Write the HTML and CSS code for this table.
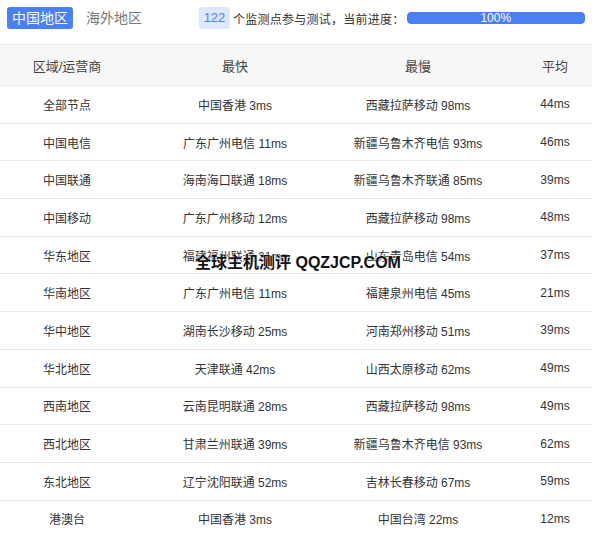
FILE: index.html
```html
<!DOCTYPE html>
<html lang="zh-CN">
<head>
<meta charset="utf-8">
<title>监测</title>
<link rel="stylesheet" href="styles.css">
</head>
<body>
<div class="page">
  <div class="topbar">
    <span class="tab active">中国地区</span>
    <span class="tab">海外地区</span>
    <span class="badge">122</span>
    <span class="info">个监测点参与测试，当前进度：</span>
    <div class="progress"><div class="progress-fill" style="width:100%">100%</div></div>
  </div>
  <div class="table-wrap">
    <div class="table">
      <div class="row head"><div class="cell">区域/运营商</div><div class="cell">最快</div><div class="cell">最慢</div><div class="cell">平均</div></div>
      <div class="row"><div class="cell">全部节点</div><div class="cell">中国香港 3ms</div><div class="cell">西藏拉萨移动 98ms</div><div class="cell">44ms</div></div>
      <div class="row"><div class="cell">中国电信</div><div class="cell">广东广州电信 11ms</div><div class="cell">新疆乌鲁木齐电信 93ms</div><div class="cell">46ms</div></div>
      <div class="row"><div class="cell">中国联通</div><div class="cell">海南海口联通 18ms</div><div class="cell">新疆乌鲁木齐联通 85ms</div><div class="cell">39ms</div></div>
      <div class="row"><div class="cell">中国移动</div><div class="cell">广东广州移动 12ms</div><div class="cell">西藏拉萨移动 98ms</div><div class="cell">48ms</div></div>
      <div class="row"><div class="cell">华东地区</div><div class="cell">福建福州联通 21ms</div><div class="cell">山东青岛电信 54ms</div><div class="cell">37ms</div></div>
      <div class="row"><div class="cell">华南地区</div><div class="cell">广东广州电信 11ms</div><div class="cell">福建泉州电信 45ms</div><div class="cell">21ms</div></div>
      <div class="row"><div class="cell">华中地区</div><div class="cell">湖南长沙移动 25ms</div><div class="cell">河南郑州移动 51ms</div><div class="cell">39ms</div></div>
      <div class="row"><div class="cell">华北地区</div><div class="cell">天津联通 42ms</div><div class="cell">山西太原移动 62ms</div><div class="cell">49ms</div></div>
      <div class="row"><div class="cell">西南地区</div><div class="cell">云南昆明联通 28ms</div><div class="cell">西藏拉萨移动 98ms</div><div class="cell">49ms</div></div>
      <div class="row"><div class="cell">西北地区</div><div class="cell">甘肃兰州联通 39ms</div><div class="cell">新疆乌鲁木齐电信 93ms</div><div class="cell">62ms</div></div>
      <div class="row"><div class="cell">东北地区</div><div class="cell">辽宁沈阳联通 52ms</div><div class="cell">吉林长春移动 67ms</div><div class="cell">59ms</div></div>
      <div class="row"><div class="cell">港澳台</div><div class="cell">中国香港 3ms</div><div class="cell">中国台湾 22ms</div><div class="cell">12ms</div></div>
    </div>
  </div>
  <div class="watermark">全球主机测评 QQZJCP.COM</div>
</div>
</body>
</html>
```
FILE: styles.css
```css
html, body {
  margin: 0;
  padding: 0;
  background: #fff;
}
body {
  font-family: "Liberation Sans", Arial, "Noto Sans CJK SC", sans-serif;
  color: #333;
  overflow: hidden;
}
.page {
  position: relative;
  width: 592px;
  height: 534px;
  overflow: hidden;
}
.topbar {
  display: flex;
  align-items: center;
  height: 22px;
  padding: 7px 7px 0;
  margin-bottom: 15px;
}
.tab {
  height: 22px;
  line-height: 22px;
  padding: 0 5px;
  font-size: 14px;
  color: #777;
  border-radius: 3px;
  margin-right: 8px;
}
.tab.active {
  background: #4a80f5;
  color: #fff;
}
.badge {
  margin-left: 44px;
  height: 22px;
  line-height: 22px;
  width: 31px;
  text-align: center;
  font-size: 13px;
  color: #4a80f5;
  background: #dde7fd;
  border-radius: 3px;
}
.info {
  margin-left: 3px;
  font-size: 12px;
  letter-spacing: 0.25px;
  color: #333;
}
.progress {
  flex: 1;
  margin-left: 2px;
  height: 12px;
  border-radius: 4px;
  background: #e6ebf5;
  overflow: hidden;
}
.progress-fill {
  height: 12px;
  line-height: 12px;
  background: #4a80f5;
  color: #fff;
  font-size: 12px;
  text-align: center;
  border-radius: 4px;
}
.table-wrap {
  width: 592px;
  overflow: hidden;
  border-top: 1px solid #e6e8eb;
}
.table {
  width: 610px;
}
.row {
  display: grid;
  grid-template-columns: 134px 202px 164px 110px;
  height: 37.7px;
  box-sizing: border-box;
  border-bottom: 1px solid #e6e9ee;
  font-size: 12px;
  color: #333;
}
.row.head {
  height: 41px;
  background: #f7f7f8;
  font-size: 13px;
  color: #444;
}
.cell {
  display: flex;
  align-items: center;
  justify-content: center;
  white-space: nowrap;
}
.watermark {
  position: absolute;
  left: 195px;
  top: 249px;
  font-size: 16px;
  font-weight: bold;
  color: #111;
  white-space: nowrap;
  text-shadow: 0 0 2px #fff, 0 0 2px #fff;
}
```
